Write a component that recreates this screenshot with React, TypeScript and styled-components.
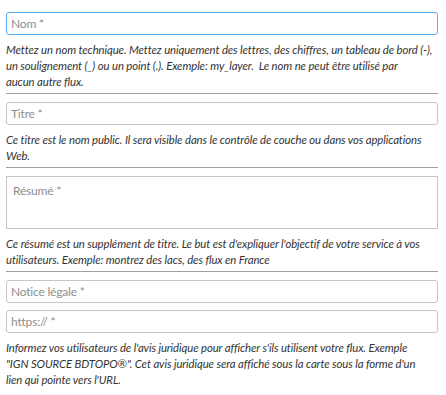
import React from "react";
import styled, { createGlobalStyle } from "styled-components";

const GlobalStyle = createGlobalStyle`
    body {
        margin: 0;
        background: #fff;
        font-family: Lato, "Open Sans", sans-serif;
    }
`;

const Form = styled.form`
    width: 432px;
    padding: 12px 8px 0 6px;
    display: flex;
    flex-direction: column;
`;

const Section = styled.div`
    display: flex;
    flex-direction: column;
    gap: 7px;
    padding-bottom: 3px;
    border-bottom: 1px solid #a0a0a0;
    margin-bottom: 8px;

    &:last-child {
        border-bottom: none;
    }
`;

const Field = styled.input<{ $active?: boolean }>`
    box-sizing: border-box;
    width: 100%;
    height: 23px;
    padding: 0 4px;
    border: 1px solid ${(p) => (p.$active ? "#5aaef0" : "#c6c6c6")};
    border-radius: 3px;
    font-family: Lato, sans-serif;
    font-size: 12px;
    letter-spacing: -0.2px;
    color: #333;
    outline: none;

    &::placeholder {
        color: #8e8e8e;
    }
`;

const Area = styled.textarea`
    box-sizing: border-box;
    width: 100%;
    height: 53px;
    padding: 6px 6px;
    border: 1px solid #c6c6c6;
    border-radius: 0;
    resize: none;
    font-family: Lato, sans-serif;
    font-size: 12px;
    letter-spacing: -0.2px;
    outline: none;

    &::placeholder {
        color: #8e8e8e;
    }
`;

const Help = styled.p`
    margin: 0;
    font-size: 11.35px;
    letter-spacing: -0.1px;
    font-style: italic;
    line-height: 16px;
    color: #333;
`;

export default function App() {
    return (
        <>
            <GlobalStyle />
            <Form>
                <Section>
                    <Field $active autoFocus placeholder="Nom *" />
                    <Help>
                        Mettez un nom technique. Mettez uniquement des lettres, des chiffres, un tableau de bord (-),
                        un soulignement (_) ou un point (.). Exemple: my_layer.&nbsp; Le nom ne peut être utilisé par
                        aucun&nbsp;autre flux.
                    </Help>
                </Section>
                <Section>
                    <Field placeholder="Titre *" />
                    <Help>
                        Ce titre est le nom public. Il sera visible dans le contrôle de couche ou dans vos applications
                        Web.
                    </Help>
                </Section>
                <Section>
                    <Area placeholder="Résumé *" />
                    <Help>
                        Ce résumé est un supplément de titre. Le but est d'expliquer l'objectif de votre service à vos
                        utilisateurs. Exemple: montrez des lacs, des flux en France
                    </Help>
                </Section>
                <Section>
                    <Field placeholder="Notice légale *" />
                    <Field placeholder="https:// *" />
                    <Help>
                        Informez vos utilisateurs de l'avis juridique pour afficher s'ils utilisent votre flux. Exemple
                        "IGN&nbsp;SOURCE&nbsp;BDTOPO®". Cet avis juridique sera affiché sous la carte sous la forme d'un
                        lien&nbsp;qui pointe vers l'URL.
                    </Help>
                </Section>
            </Form>
        </>
    );
}
